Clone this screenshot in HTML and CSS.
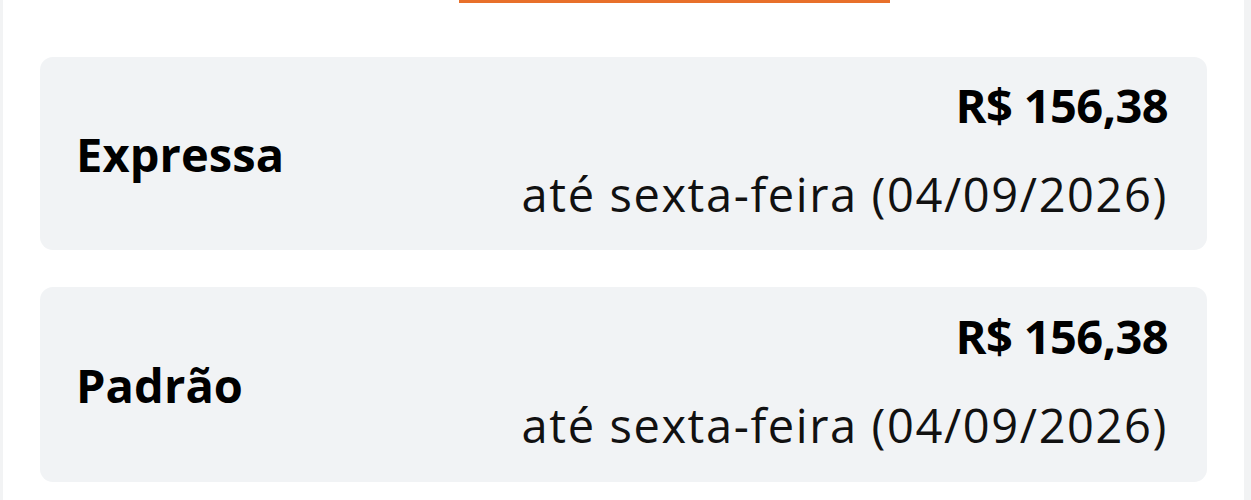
FILE: index.html
```html
<!DOCTYPE html>
<html lang="pt-BR">
<head>
<meta charset="utf-8">
<title>Frete</title>
<link rel="stylesheet" href="styles.css">
</head>
<body>
<div class="panel">
  <div class="tab-indicator"></div>
  <div class="options">
    <div class="option">
      <div class="option-name">Expressa</div>
      <div class="option-info">
        <div class="option-price">R$ 156,38</div>
        <div class="option-date">até sexta-feira (04/09/2026)</div>
      </div>
    </div>
    <div class="option">
      <div class="option-name">Padrão</div>
      <div class="option-info">
        <div class="option-price">R$ 156,38</div>
        <div class="option-date">até sexta-feira (04/09/2026)</div>
      </div>
    </div>
  </div>
</div>
</body>
</html>
```
FILE: styles.css
```css
html, body {
  margin: 0;
  padding: 0;
}
body {
  background: #f2f3f4;
  font-family: "Open Sans", "Noto Sans", sans-serif;
  color: #000;
  overflow: hidden;
}
.panel {
  background: #fff;
  margin: 0 7px 0 3px;
  height: 500px;
}
.tab-indicator {
  margin-left: 456px;
  width: 431px;
  height: 3px;
  background: #e8702a;
}
.options {
  display: flex;
  flex-direction: column;
  gap: 37px;
  padding: 54px 37px 0 37px;
}
.option {
  background: #f1f3f5;
  border-radius: 13px;
  height: 193px;
  box-sizing: border-box;
  padding: 0 39px 0 36px;
  display: flex;
  align-items: center;
  justify-content: space-between;
}
.option + .option {
  height: 195px;
}
.option-name {
  font-size: 47px;
  font-weight: 700;
  letter-spacing: 0.1px;
}
.option-info {
  text-align: right;
  padding-top: 12px;
}
.option-price {
  font-size: 47px;
  font-weight: 700;
  line-height: 56px;
  letter-spacing: -0.6px;
}
.option-date {
  margin-top: 12px;
  font-size: 47px;
  font-weight: 400;
  line-height: 98px;
  letter-spacing: 1.6px;
  color: #111;
}
```
